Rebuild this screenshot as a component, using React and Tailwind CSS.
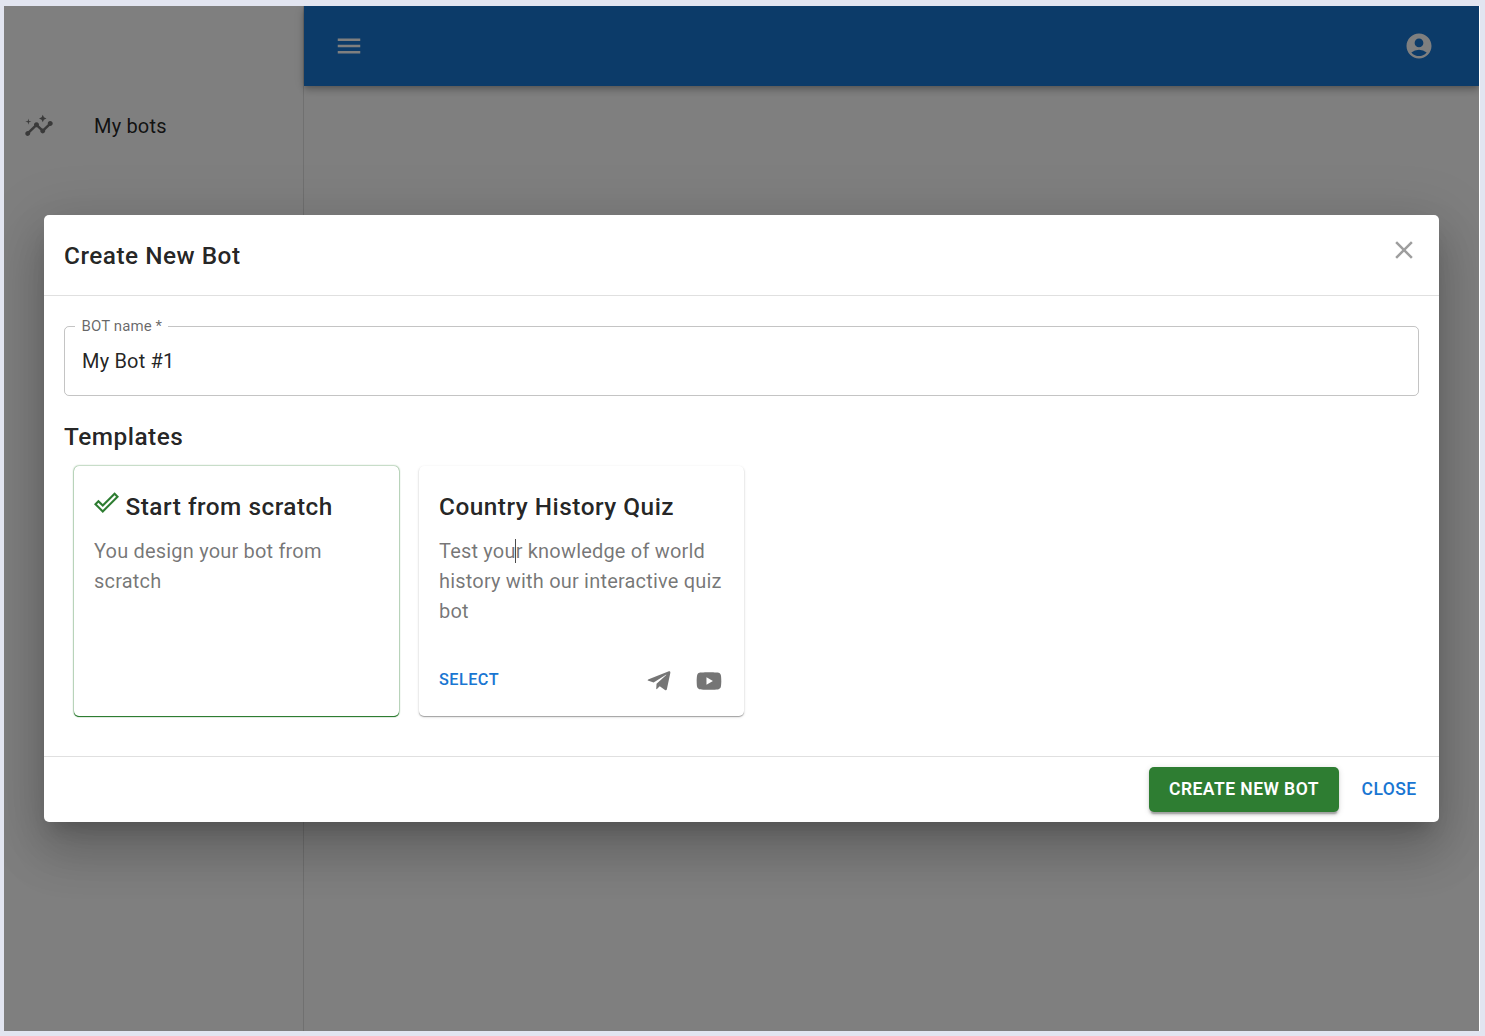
import React from "react";
import { MdInsights, MdMenu, MdAccountCircle, MdClose, MdDoneOutline } from "react-icons/md";
import { FaTelegramPlane, FaYoutube } from "react-icons/fa";

function Sidebar() {
  return (
    <aside className="w-[300px] shrink-0 border-r border-black/12 bg-white pt-[90px]">
      <div className="flex h-[60px] items-center pl-5">
        <MdInsights className="size-[30px] text-black/54" />
        <span className="ml-10 text-[20px] leading-[30px] tracking-[0.188px]">My bots</span>
      </div>
    </aside>
  );
}

function AppBar() {
  return (
    <header className="flex h-20 items-center justify-between bg-[#1976d2] pr-[45px] pl-[30px] text-white shadow-[0_2.5px_5px_-1.25px_rgba(0,0,0,0.2),0_5px_6.25px_0_rgba(0,0,0,0.14),0_1.25px_12.5px_0_rgba(0,0,0,0.12)]">
      <MdMenu className="size-[30px]" />
      <MdAccountCircle className="size-[30px]" />
    </header>
  );
}

function ScratchCard() {
  return (
    <article className="h-[250px] w-[325px] rounded-[5px] bg-white p-5 shadow-[0_1px_0_0_#2e7d32,0_1px_1px_0_#2e7d32,0_0_2px_0_#2e7d32]">
      <h3 className="flex h-[42px] items-center text-[24.4px] leading-10 font-medium tracking-[0.49px]">
        <MdDoneOutline className="mt-[-9px] mr-[6.5px] size-[25px] text-[#2e7d32]" />
        Start from scratch
      </h3>
      <p className="mt-[8px] text-[20px] leading-[30px] tracking-[0.188px] text-black/55">
        You design your bot from scratch
      </p>
    </article>
  );
}

function QuizCard() {
  return (
    <article className="flex h-[250px] w-[325px] flex-col rounded-[5px] bg-white p-5 shadow-[0_1px_1px_0_rgba(0,0,0,0.3),0_1px_3px_0_rgba(0,0,0,0.14)]">
      <h3 className="h-[42px] text-[24.4px] leading-[42px] font-medium tracking-[0.49px]">Country History Quiz</h3>
      <p className="relative mt-[8px] text-[20px] leading-[30px] tracking-[0.188px] text-black/55">
        Test your knowledge of world history with our interactive quiz bot
        <span className="absolute top-[3px] left-[76px] h-6 w-px bg-black/70" />
      </p>
      <div className="mt-[38px] flex h-[34px] items-center justify-between">
        <button className="text-[16.25px] leading-7 font-medium tracking-[0.46px] text-[#1976d2]">SELECT</button>
        <div className="mt-[2px] mr-[2px] flex items-center gap-[24px] text-black/54">
          <FaTelegramPlane className="size-[26px]" />
          <FaYoutube className="size-[26px]" />
        </div>
      </div>
    </article>
  );
}

function Dialog() {
  return (
    <section
      role="dialog"
      className="h-[607px] w-full rounded-[5px] bg-white shadow-[0_13.75px_18.75px_-8.75px_rgba(0,0,0,0.2),0_30px_47.5px_3.75px_rgba(0,0,0,0.14),0_11.25px_57.5px_10px_rgba(0,0,0,0.12)]"
    >
      <div className="flex h-20 items-center justify-between pr-5 pl-5">
        <h2 className="pt-[2px] text-[24.4px] leading-10 font-medium tracking-[0.49px]">Create New Bot</h2>
        <MdClose className="mt-[-10px] size-[30px] text-[#9e9e9e]" />
      </div>
      <div className="h-[462px] border-y border-black/12 px-5 pt-5">
        <fieldset className="h-[80px] rounded-[5px] border border-black/23 pl-[10px]">
          <legend className="h-5 w-[93px] pl-[6.5px] text-[15px] leading-5 tracking-[0.1px] whitespace-nowrap text-black/60">
            BOT name *
          </legend>
          <input
            className="block h-[50px] w-full pl-[7px] text-[20px] tracking-[0.188px] outline-none"
            defaultValue="My Bot #1"
          />
        </fieldset>
        <h2 className="mt-[21px] text-[24.4px] leading-10 font-medium tracking-[0.49px]">Templates</h2>
        <div className="mt-[9px] ml-[10px] flex gap-[20px]">
          <ScratchCard />
          <QuizCard />
        </div>
      </div>
      <div className="flex h-[65px] items-center justify-end gap-[10px] px-[10px]">
        <button className="h-[45px] w-[190px] rounded-[5px] bg-[#2e7d32] text-[17.5px] font-semibold tracking-[0.46px] text-white shadow-[0_3.75px_1.25px_-2.5px_rgba(0,0,0,0.2),0_2.5px_2.5px_0_rgba(0,0,0,0.14),0_1.25px_6.25px_0_rgba(0,0,0,0.12)]">
          CREATE NEW BOT
        </button>
        <button className="h-[45px] w-20 text-[17.5px] font-medium tracking-[0.4px] text-[#1976d2]">CLOSE</button>
      </div>
    </section>
  );
}

export default function App() {
  return (
    <div className="h-[1036px] w-[1485px] overflow-hidden bg-[#e2e5f0] pt-[6px] pl-1 font-['Roboto',sans-serif] text-black/87">
      <div className="h-[1025px] w-[1476px] border-r border-white">
        <div className="relative flex h-full overflow-hidden bg-white">
          <Sidebar />
          <main className="flex-1">
            <AppBar />
          </main>
          <div className="absolute inset-0 flex items-center bg-black/50 px-10">
            <Dialog />
          </div>
        </div>
      </div>
    </div>
  );
}
